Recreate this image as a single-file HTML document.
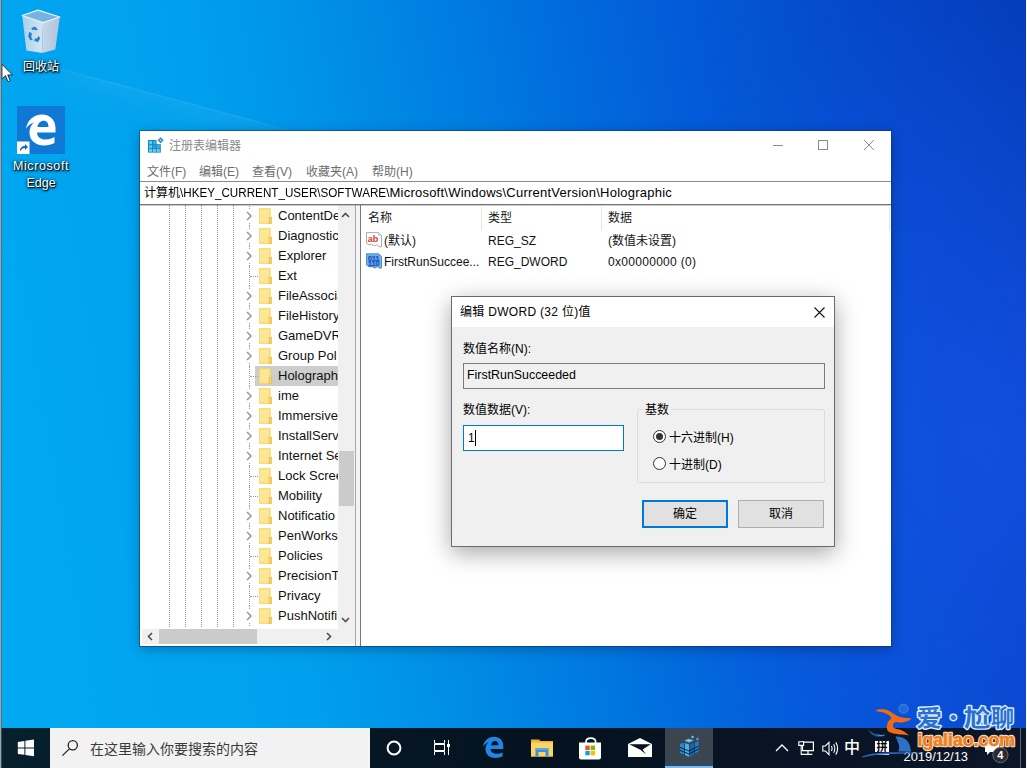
<!DOCTYPE html>
<html lang="zh-CN">
<head>
<meta charset="utf-8">
<title>注册表编辑器</title>
<style>
*{box-sizing:border-box;margin:0;padding:0}
html,body{width:1027px;height:768px;overflow:hidden}
body{position:relative;font-family:"Liberation Sans","Noto Sans CJK SC",sans-serif;font-size:12px;line-height:16px;color:#000;
background:
 radial-gradient(ellipse 380px 460px at 1000px 440px,rgba(26,86,240,.6),rgba(26,86,240,.25) 60%,rgba(26,86,240,0) 100%),
 linear-gradient(80deg,#00aaf2 0%,#02a3ef 18%,#00a0ee 27%,#0094e8 36%,#0087e4 44%,#0078e0 53%,#0070de 57%,#035ad8 70%,#0546c8 87.5%,#043cb8 100%);}
.abs{position:absolute}
#leftedge{left:0;top:0;width:1px;height:768px;background:#a3a3a3;box-shadow:1px 0 0 rgba(70,100,120,.65);z-index:50}
/* desktop icons */
.dlabel{position:absolute;color:#fff;font-size:12px;text-align:center;line-height:17px;text-shadow:1px 1px 1px rgba(0,0,0,.95),0 1px 3px rgba(0,0,0,.85),0 0 3px rgba(0,0,0,.6)}
/* main window */
#win{left:140px;top:131px;width:751px;height:515px;background:#fff;box-shadow:0 0 0 1px rgba(8,50,110,.5),0 3px 12px rgba(0,0,0,.28)}
#wi{left:1px;top:1px;width:750px;height:514px}
#title{left:-1px;top:-1px;width:751px;height:29px;background:#fff}
#title .t{position:absolute;left:29px;top:7px;font-size:12px;color:#8a8a8a;letter-spacing:0}
#menu{left:-1px;top:28px;width:751px;height:21px;background:#fff}
#menu span{position:absolute;top:4px;font-size:12px;color:#6d6d6d;white-space:nowrap}
#addr{left:-1px;top:49px;width:751px;height:24px;border-top:1px solid #8a8a8a;border-bottom:1px solid #747474;box-shadow:0 1px 0 rgba(110,110,110,.35);z-index:2;background:#fff}
#addr span{position:absolute;left:4px;top:3px;font-size:12.65px;white-space:nowrap}
#tree{left:0;top:73px;width:215px;height:441px;background:#fff;overflow:hidden}
#split{left:214px;top:73px;width:6px;height:441px;background:#f4f4f4;border-left:1px solid #a8a8a8;border-right:1px solid #767676}
#list{left:221px;top:73px;width:529px;height:441px;background:#fff;overflow:hidden}
.trow{position:absolute;left:0;height:20px;width:198px;white-space:nowrap}
.trow .lbl{position:absolute;left:137px;top:0;line-height:20px;font-size:13px;color:#111;letter-spacing:0}
.trow .fold{position:absolute;left:118px;top:2px;width:13px;height:16px}
.trow .chev{position:absolute;left:104px;top:5px;width:8px;height:10px}
.vline{position:absolute;top:0;width:0;height:422px;border-left:1px dotted #9a9a9a}
/* dialog */
#dlg{left:451px;top:296px;width:384px;height:251px;background:#f0f0f0;border:1px solid #6b6b6b;box-shadow:0 6px 22px rgba(0,0,0,.35)}
#dlg .cap{position:absolute;left:0;top:0;width:382px;height:30px;background:#fff}
#dlg .lab{position:absolute;font-size:12px;white-space:nowrap}
.btn{position:absolute;height:28px;width:86px;background:#e1e1e1;border:1px solid #adadad;text-align:center;font-size:12px;line-height:27px}

.trow.sel::before{content:"";position:absolute;left:114px;top:0;width:84px;height:20px;background:#cdcdcd}
.trow .vd{position:absolute;left:108px;top:0;height:20px;width:0;border-left:1px dotted #9a9a9a}
.trow .vt{position:absolute;left:108px;top:0;height:3px;width:0;border-left:1px dotted #9a9a9a}
.trow .vb{position:absolute;left:108px;top:17px;height:3px;width:0;border-left:1px dotted #9a9a9a}
.trow .hd{position:absolute;left:109px;top:10px;width:8px;height:0;border-top:1px dotted #9a9a9a}
#vs{left:197px;top:0px;width:17px;height:439px;background:#f0f0f0}
#vs .thumb{left:1px;top:246px;width:15px;height:55px;background:#cbcbcb}
#hs{left:1px;top:424px;width:213px;height:15px;background:#f0f0f0}
#hs .thumb{left:17px;top:0;width:98px;height:15px;background:#cbcbcb}
.hdr{left:0;top:1px;width:529px;height:25px}
.hdr span{position:absolute;top:4px;font-size:12px;color:#1a1a1a}
.hdr i{position:absolute;top:1px;width:1px;height:24px;background:#e5e5e5}
.lrow{left:0;width:529px;height:21px;white-space:nowrap}
.lrow span{position:absolute;top:3px;font-size:12px;color:#111}
.lrow .ico{position:absolute;left:4px;top:2px;width:16px;height:16px}
#dlg input{display:none}
.tbx{position:absolute;font-size:12px;white-space:nowrap}
.radio{position:absolute;width:13px;height:13px;border-radius:50%;border:1px solid #333;background:#fff}
.radio.on::after{content:"";position:absolute;left:2px;top:2px;width:7px;height:7px;border-radius:50%;background:#333}
/* taskbar */
#tb{left:0;top:728px;width:1027px;height:40px;background:linear-gradient(90deg,#06202d 0%,#061826 30%,#05121f 55%,#091526 80%,#0b1628 100%)}
#search{left:50px;top:728px;width:320px;height:40px;background:#f2f2f2}
#search span{position:absolute;left:40px;top:12.5px;font-size:14px;color:#3a3a3a;white-space:nowrap}
</style>
</head>
<body>
<div id="leftedge" class="abs"></div><div class="abs" style="left:1026px;top:0;width:1px;height:768px;background:#fff;z-index:50"></div>

<div class="abs" style="left:0;top:52px;width:320px;height:46px;transform-origin:0 0;transform:rotate(15deg);background:linear-gradient(180deg,rgba(255,255,255,.13),rgba(255,255,255,.05) 5%,rgba(255,255,255,.02) 40%,rgba(255,255,255,0));-webkit-mask-image:linear-gradient(90deg,transparent 5%,#000 30%,#000 80%,transparent)"></div>
<!-- DESKTOP ICONS -->
<div id="icons">
<!-- recycle bin -->
<svg class="abs" style="left:18px;top:6px" width="46" height="50" viewBox="0 0 46 50">
<defs>
<linearGradient id="rbL" x1="0" y1="0" x2="1" y2="0"><stop offset="0" stop-color="#a9cfea"/><stop offset="1" stop-color="#d6e6f2"/></linearGradient>
<linearGradient id="rbR" x1="0" y1="0" x2="1" y2="0"><stop offset="0" stop-color="#c6d8e8"/><stop offset="1" stop-color="#aec3d9"/></linearGradient>
</defs>
<path d="M4.2 9.5 L25 16.6 L24.2 47 L8.4 44.6z" fill="url(#rbL)"/>
<path d="M25 16.6 L41.8 11 L37.3 43.6 L24.2 47z" fill="url(#rbR)"/>
<path d="M4.2 9.5 L20 4.2 L41.8 11 L25 16.6z" fill="#74b4e2" stroke="#e6f3fb" stroke-width="1.3" stroke-linejoin="round"/>
<g fill="#1b7fd0"><path d="M13.2 22.2 l3.6 -1.8 l3 3.2 l-2.2 1 l-1.6 -1.4 l-1.4 1z"/><path d="M11.2 26 l2.6 1.2 l-0.6 4.2 l1.6 2.6 l-2.4 0.2 l-2.2 -3.6z"/><path d="M16.4 35 l3.6 1 l2.2 -3.8 l-2 -2.4 l-0.8 2.6 l-2.6 0.2z"/></g>
</svg>
<div class="dlabel" style="left:11px;top:59px;width:60px">回收站</div>
<!-- edge -->
<svg class="abs" style="left:17px;top:106px" width="48" height="48" viewBox="0 0 48 48">
<rect width="48" height="48" fill="#0f78d4"/>
<path fill="#fff" fill-rule="evenodd" d="M9 23 C10 14 17 8.4 25 8.4 C33 8.4 38.5 14 38.5 22 V26.5 H20 C20 31 24 33.5 28.5 33.5 C32 33.5 35 32.5 37.5 31 V37 C34.5 38.5 31 39.5 27 39.5 C18 39.5 12.5 34 12.5 26.5 C12.5 22 14.5 18.5 17 16.5 C13.5 17.5 10.5 20 9 23z M20.5 21 C21 17 24 14.8 26.5 14.8 C30 14.8 31.5 17.5 31.5 21z"/>
<rect x="0" y="35.5" width="12.5" height="12.5" fill="#fff"/>
<path d="M3 45.5 C3 41.5 5 40 8 40 V38 L11 41 L8 44 V42 C6 42 4.5 43 3 45.5z" fill="#1d62b8"/>
</svg>
<div class="dlabel" style="left:6px;top:158px;width:70px;font-size:12.5px"><span style="letter-spacing:.6px">Microsoft</span><br>Edge</div>
<!-- cursor -->
<svg class="abs" style="left:1px;top:63px" width="13" height="20" viewBox="0 0 14 21"><path d="M1 1 V17 L4.8 13.4 L7.6 19.8 L10 18.8 L7.3 12.6 H12.4z" fill="#fff" stroke="#222" stroke-width="1"/></svg>
</div>

<!-- MAIN WINDOW -->
<div id="win" class="abs"><div id="wi" class="abs">
  <div id="title" class="abs"><svg class="abs" style="left:8px;top:6px" width="16" height="16" viewBox="0 0 16 16">
<rect x="0" y="3" width="8.6" height="12.6" fill="#1b86bd"/><rect x="8" y="7.2" width="4.8" height="8.4" fill="#1b86bd"/>
<rect x="1" y="4" width="3" height="3.2" fill="#56cdf9"/><rect x="4.9" y="4" width="3" height="3.2" fill="#2eb0e6"/>
<rect x="1" y="8.1" width="3" height="3.2" fill="#49c6f7"/><rect x="4.9" y="8.1" width="3" height="3.2" fill="#2aa2d8"/><rect x="8.8" y="8.1" width="3" height="3.2" fill="#3ab1e4"/>
<rect x="1" y="12.1" width="3" height="2.8" fill="#5fd0fa"/><rect x="4.9" y="12.1" width="3" height="2.8" fill="#5fd0fa"/><rect x="8.8" y="12.1" width="3" height="2.8" fill="#5fd0fa"/>
<path d="M12.6 0.2 L15.6 3.2 L12.6 6.2 L9.6 3.2z" fill="#1b86bd"/><path d="M12.6 1.8 L14 3.2 L12.6 4.6 L11.2 3.2z" fill="#7fdcfb"/>
</svg><span class="t">注册表编辑器</span><svg class="abs" style="left:632px;top:8px" width="104" height="14" viewBox="0 0 104 14">
<path d="M1 6.5 H11" stroke="#8a8a8a" stroke-width="1" fill="none"/>
<rect x="46.5" y="1.5" width="9" height="9" stroke="#8a8a8a" stroke-width="1" fill="none"/>
<path d="M92 1 L102 11 M102 1 L92 11" stroke="#8a8a8a" stroke-width="1" fill="none"/>
</svg></div>
  <div id="menu" class="abs">
    <span style="left:7px">文件(F)</span><span style="left:59px">编辑(E)</span><span style="left:112px">查看(V)</span><span style="left:166px">收藏夹(A)</span><span style="left:232px">帮助(H)</span>
  </div>
  <div id="addr" class="abs"><span style="font-size:12px">计算机</span><span style="left:39.5px;transform:scaleX(.922);transform-origin:0 0">\HKEY_CURRENT_USER\SOFTWARE\</span><span style="left:249.5px;font-size:13px;letter-spacing:.23px">Microsoft\Windows\CurrentVersion\Holographic</span></div>
  <div id="tree" class="abs">
<div class="vline" style="left:28px"></div>
<div class="vline" style="left:44px"></div>
<div class="vline" style="left:60px"></div>
<div class="vline" style="left:76px"></div>
<div class="vline" style="left:92px"></div>
<div class="trow" style="top:1px"><i class="vt"></i><i class="vb"></i><svg class="chev" viewBox="0 0 8 10"><path d="M2 1 L6 5 L2 9" fill="none" stroke="#979797" stroke-width="1.5"/></svg><svg class="fold" viewBox="0 0 13 16"><path d="M0.3 0.3 h11 v15.2 h-11z" fill="#fce284" stroke="#f5d15e" stroke-width=".7"/><path d="M1.4 2 h8.4 v11.6 h-8.4z" fill="#fde796"/><path d="M10.2 9.4 h2.3 v6.1 h-2.3z" fill="#f9dc70" stroke="#e3ba42" stroke-width=".8"/></svg><span class="lbl">ContentDe</span></div>
<div class="trow" style="top:21px"><i class="vt"></i><i class="vb"></i><svg class="chev" viewBox="0 0 8 10"><path d="M2 1 L6 5 L2 9" fill="none" stroke="#979797" stroke-width="1.5"/></svg><svg class="fold" viewBox="0 0 13 16"><path d="M0.3 0.3 h11 v15.2 h-11z" fill="#fce284" stroke="#f5d15e" stroke-width=".7"/><path d="M1.4 2 h8.4 v11.6 h-8.4z" fill="#fde796"/><path d="M10.2 9.4 h2.3 v6.1 h-2.3z" fill="#f9dc70" stroke="#e3ba42" stroke-width=".8"/></svg><span class="lbl">Diagnostic</span></div>
<div class="trow" style="top:41px"><i class="vt"></i><i class="vb"></i><svg class="chev" viewBox="0 0 8 10"><path d="M2 1 L6 5 L2 9" fill="none" stroke="#979797" stroke-width="1.5"/></svg><svg class="fold" viewBox="0 0 13 16"><path d="M0.3 0.3 h11 v15.2 h-11z" fill="#fce284" stroke="#f5d15e" stroke-width=".7"/><path d="M1.4 2 h8.4 v11.6 h-8.4z" fill="#fde796"/><path d="M10.2 9.4 h2.3 v6.1 h-2.3z" fill="#f9dc70" stroke="#e3ba42" stroke-width=".8"/></svg><span class="lbl">Explorer</span></div>
<div class="trow" style="top:61px"><i class="vd"></i><i class="hd"></i><svg class="fold" viewBox="0 0 13 16"><path d="M0.3 0.3 h11 v15.2 h-11z" fill="#fce284" stroke="#f5d15e" stroke-width=".7"/><path d="M1.4 2 h8.4 v11.6 h-8.4z" fill="#fde796"/><path d="M10.2 9.4 h2.3 v6.1 h-2.3z" fill="#f9dc70" stroke="#e3ba42" stroke-width=".8"/></svg><span class="lbl">Ext</span></div>
<div class="trow" style="top:81px"><i class="vt"></i><i class="vb"></i><svg class="chev" viewBox="0 0 8 10"><path d="M2 1 L6 5 L2 9" fill="none" stroke="#979797" stroke-width="1.5"/></svg><svg class="fold" viewBox="0 0 13 16"><path d="M0.3 0.3 h11 v15.2 h-11z" fill="#fce284" stroke="#f5d15e" stroke-width=".7"/><path d="M1.4 2 h8.4 v11.6 h-8.4z" fill="#fde796"/><path d="M10.2 9.4 h2.3 v6.1 h-2.3z" fill="#f9dc70" stroke="#e3ba42" stroke-width=".8"/></svg><span class="lbl">FileAssocia</span></div>
<div class="trow" style="top:101px"><i class="vt"></i><i class="vb"></i><svg class="chev" viewBox="0 0 8 10"><path d="M2 1 L6 5 L2 9" fill="none" stroke="#979797" stroke-width="1.5"/></svg><svg class="fold" viewBox="0 0 13 16"><path d="M0.3 0.3 h11 v15.2 h-11z" fill="#fce284" stroke="#f5d15e" stroke-width=".7"/><path d="M1.4 2 h8.4 v11.6 h-8.4z" fill="#fde796"/><path d="M10.2 9.4 h2.3 v6.1 h-2.3z" fill="#f9dc70" stroke="#e3ba42" stroke-width=".8"/></svg><span class="lbl">FileHistory</span></div>
<div class="trow" style="top:121px"><i class="vt"></i><i class="vb"></i><svg class="chev" viewBox="0 0 8 10"><path d="M2 1 L6 5 L2 9" fill="none" stroke="#979797" stroke-width="1.5"/></svg><svg class="fold" viewBox="0 0 13 16"><path d="M0.3 0.3 h11 v15.2 h-11z" fill="#fce284" stroke="#f5d15e" stroke-width=".7"/><path d="M1.4 2 h8.4 v11.6 h-8.4z" fill="#fde796"/><path d="M10.2 9.4 h2.3 v6.1 h-2.3z" fill="#f9dc70" stroke="#e3ba42" stroke-width=".8"/></svg><span class="lbl">GameDVR</span></div>
<div class="trow" style="top:141px"><i class="vt"></i><i class="vb"></i><svg class="chev" viewBox="0 0 8 10"><path d="M2 1 L6 5 L2 9" fill="none" stroke="#979797" stroke-width="1.5"/></svg><svg class="fold" viewBox="0 0 13 16"><path d="M0.3 0.3 h11 v15.2 h-11z" fill="#fce284" stroke="#f5d15e" stroke-width=".7"/><path d="M1.4 2 h8.4 v11.6 h-8.4z" fill="#fde796"/><path d="M10.2 9.4 h2.3 v6.1 h-2.3z" fill="#f9dc70" stroke="#e3ba42" stroke-width=".8"/></svg><span class="lbl">Group Pol</span></div>
<div class="trow sel" style="top:161px"><i class="vd"></i><i class="hd"></i><svg class="fold" viewBox="0 0 13 16"><path d="M0.3 0.3 h11 v15.2 h-11z" fill="#fce284" stroke="#f5d15e" stroke-width=".7"/><path d="M1.4 2 h8.4 v11.6 h-8.4z" fill="#fde796"/><path d="M10.2 9.4 h2.3 v6.1 h-2.3z" fill="#f9dc70" stroke="#e3ba42" stroke-width=".8"/></svg><span class="lbl">Holograph</span></div>
<div class="trow" style="top:181px"><i class="vt"></i><i class="vb"></i><svg class="chev" viewBox="0 0 8 10"><path d="M2 1 L6 5 L2 9" fill="none" stroke="#979797" stroke-width="1.5"/></svg><svg class="fold" viewBox="0 0 13 16"><path d="M0.3 0.3 h11 v15.2 h-11z" fill="#fce284" stroke="#f5d15e" stroke-width=".7"/><path d="M1.4 2 h8.4 v11.6 h-8.4z" fill="#fde796"/><path d="M10.2 9.4 h2.3 v6.1 h-2.3z" fill="#f9dc70" stroke="#e3ba42" stroke-width=".8"/></svg><span class="lbl">ime</span></div>
<div class="trow" style="top:201px"><i class="vt"></i><i class="vb"></i><svg class="chev" viewBox="0 0 8 10"><path d="M2 1 L6 5 L2 9" fill="none" stroke="#979797" stroke-width="1.5"/></svg><svg class="fold" viewBox="0 0 13 16"><path d="M0.3 0.3 h11 v15.2 h-11z" fill="#fce284" stroke="#f5d15e" stroke-width=".7"/><path d="M1.4 2 h8.4 v11.6 h-8.4z" fill="#fde796"/><path d="M10.2 9.4 h2.3 v6.1 h-2.3z" fill="#f9dc70" stroke="#e3ba42" stroke-width=".8"/></svg><span class="lbl">Immersive</span></div>
<div class="trow" style="top:221px"><i class="vt"></i><i class="vb"></i><svg class="chev" viewBox="0 0 8 10"><path d="M2 1 L6 5 L2 9" fill="none" stroke="#979797" stroke-width="1.5"/></svg><svg class="fold" viewBox="0 0 13 16"><path d="M0.3 0.3 h11 v15.2 h-11z" fill="#fce284" stroke="#f5d15e" stroke-width=".7"/><path d="M1.4 2 h8.4 v11.6 h-8.4z" fill="#fde796"/><path d="M10.2 9.4 h2.3 v6.1 h-2.3z" fill="#f9dc70" stroke="#e3ba42" stroke-width=".8"/></svg><span class="lbl">InstallServ</span></div>
<div class="trow" style="top:241px"><i class="vt"></i><i class="vb"></i><svg class="chev" viewBox="0 0 8 10"><path d="M2 1 L6 5 L2 9" fill="none" stroke="#979797" stroke-width="1.5"/></svg><svg class="fold" viewBox="0 0 13 16"><path d="M0.3 0.3 h11 v15.2 h-11z" fill="#fce284" stroke="#f5d15e" stroke-width=".7"/><path d="M1.4 2 h8.4 v11.6 h-8.4z" fill="#fde796"/><path d="M10.2 9.4 h2.3 v6.1 h-2.3z" fill="#f9dc70" stroke="#e3ba42" stroke-width=".8"/></svg><span class="lbl">Internet Se</span></div>
<div class="trow" style="top:261px"><i class="vd"></i><i class="hd"></i><svg class="fold" viewBox="0 0 13 16"><path d="M0.3 0.3 h11 v15.2 h-11z" fill="#fce284" stroke="#f5d15e" stroke-width=".7"/><path d="M1.4 2 h8.4 v11.6 h-8.4z" fill="#fde796"/><path d="M10.2 9.4 h2.3 v6.1 h-2.3z" fill="#f9dc70" stroke="#e3ba42" stroke-width=".8"/></svg><span class="lbl">Lock Scree</span></div>
<div class="trow" style="top:281px"><i class="vd"></i><i class="hd"></i><svg class="fold" viewBox="0 0 13 16"><path d="M0.3 0.3 h11 v15.2 h-11z" fill="#fce284" stroke="#f5d15e" stroke-width=".7"/><path d="M1.4 2 h8.4 v11.6 h-8.4z" fill="#fde796"/><path d="M10.2 9.4 h2.3 v6.1 h-2.3z" fill="#f9dc70" stroke="#e3ba42" stroke-width=".8"/></svg><span class="lbl">Mobility</span></div>
<div class="trow" style="top:301px"><i class="vt"></i><i class="vb"></i><svg class="chev" viewBox="0 0 8 10"><path d="M2 1 L6 5 L2 9" fill="none" stroke="#979797" stroke-width="1.5"/></svg><svg class="fold" viewBox="0 0 13 16"><path d="M0.3 0.3 h11 v15.2 h-11z" fill="#fce284" stroke="#f5d15e" stroke-width=".7"/><path d="M1.4 2 h8.4 v11.6 h-8.4z" fill="#fde796"/><path d="M10.2 9.4 h2.3 v6.1 h-2.3z" fill="#f9dc70" stroke="#e3ba42" stroke-width=".8"/></svg><span class="lbl">Notificatio</span></div>
<div class="trow" style="top:321px"><i class="vt"></i><i class="vb"></i><svg class="chev" viewBox="0 0 8 10"><path d="M2 1 L6 5 L2 9" fill="none" stroke="#979797" stroke-width="1.5"/></svg><svg class="fold" viewBox="0 0 13 16"><path d="M0.3 0.3 h11 v15.2 h-11z" fill="#fce284" stroke="#f5d15e" stroke-width=".7"/><path d="M1.4 2 h8.4 v11.6 h-8.4z" fill="#fde796"/><path d="M10.2 9.4 h2.3 v6.1 h-2.3z" fill="#f9dc70" stroke="#e3ba42" stroke-width=".8"/></svg><span class="lbl">PenWorks</span></div>
<div class="trow" style="top:341px"><i class="vd"></i><i class="hd"></i><svg class="fold" viewBox="0 0 13 16"><path d="M0.3 0.3 h11 v15.2 h-11z" fill="#fce284" stroke="#f5d15e" stroke-width=".7"/><path d="M1.4 2 h8.4 v11.6 h-8.4z" fill="#fde796"/><path d="M10.2 9.4 h2.3 v6.1 h-2.3z" fill="#f9dc70" stroke="#e3ba42" stroke-width=".8"/></svg><span class="lbl">Policies</span></div>
<div class="trow" style="top:361px"><i class="vt"></i><i class="vb"></i><svg class="chev" viewBox="0 0 8 10"><path d="M2 1 L6 5 L2 9" fill="none" stroke="#979797" stroke-width="1.5"/></svg><svg class="fold" viewBox="0 0 13 16"><path d="M0.3 0.3 h11 v15.2 h-11z" fill="#fce284" stroke="#f5d15e" stroke-width=".7"/><path d="M1.4 2 h8.4 v11.6 h-8.4z" fill="#fde796"/><path d="M10.2 9.4 h2.3 v6.1 h-2.3z" fill="#f9dc70" stroke="#e3ba42" stroke-width=".8"/></svg><span class="lbl">PrecisionT</span></div>
<div class="trow" style="top:381px"><i class="vd"></i><i class="hd"></i><svg class="fold" viewBox="0 0 13 16"><path d="M0.3 0.3 h11 v15.2 h-11z" fill="#fce284" stroke="#f5d15e" stroke-width=".7"/><path d="M1.4 2 h8.4 v11.6 h-8.4z" fill="#fde796"/><path d="M10.2 9.4 h2.3 v6.1 h-2.3z" fill="#f9dc70" stroke="#e3ba42" stroke-width=".8"/></svg><span class="lbl">Privacy</span></div>
<div class="trow" style="top:401px"><i class="vt"></i><i class="vb"></i><svg class="chev" viewBox="0 0 8 10"><path d="M2 1 L6 5 L2 9" fill="none" stroke="#979797" stroke-width="1.5"/></svg><svg class="fold" viewBox="0 0 13 16"><path d="M0.3 0.3 h11 v15.2 h-11z" fill="#fce284" stroke="#f5d15e" stroke-width=".7"/><path d="M1.4 2 h8.4 v11.6 h-8.4z" fill="#fde796"/><path d="M10.2 9.4 h2.3 v6.1 h-2.3z" fill="#f9dc70" stroke="#e3ba42" stroke-width=".8"/></svg><span class="lbl">PushNotifi</span></div>
<div id="vs" class="abs"><svg class="abs" style="left:3px;top:7px" width="9" height="6" viewBox="0 0 9 6"><path d="M1 5 L4.5 1.5 L8 5" fill="none" stroke="#505050" stroke-width="1.6"/></svg><div class="thumb abs"></div><svg class="abs" style="left:3px;top:412px" width="9" height="6" viewBox="0 0 9 6"><path d="M1 1 L4.5 4.5 L8 1" fill="none" stroke="#505050" stroke-width="1.6"/></svg></div>
<div id="hs" class="abs"><svg class="abs" style="left:5px;top:3px" width="6" height="9" viewBox="0 0 6 9"><path d="M5 1 L1.5 4.5 L5 8" fill="none" stroke="#505050" stroke-width="1.6"/></svg><div class="thumb abs"></div><svg class="abs" style="left:184px;top:3px" width="6" height="9" viewBox="0 0 6 9"><path d="M1 1 L4.5 4.5 L1 8" fill="none" stroke="#505050" stroke-width="1.6"/></svg></div>
</div>
  <div id="split" class="abs"></div>
  <div id="list" class="abs">
<div class="hdr abs"><span style="left:6px">名称</span><i style="left:119px"></i><span style="left:126px">类型</span><i style="left:239px"></i><span style="left:246px">数据</span><i style="left:527px"></i></div>
<div class="lrow abs" style="top:25px">
<svg class="ico" viewBox="0 0 16 16"><path d="M0.5 0.6 h12 l3 2.8 v11.6 l-2.6-0.4 l-2-1.8 l-2.6 1 l-2.8-1.4 l-2.4 0.4 l-2.6-1.6z" fill="#fff" stroke="#a3a3a3" stroke-width=".9"/><path d="M12.5 0.6 v2.8 h3" fill="none" stroke="#b9b9b9" stroke-width=".7"/><text x="1.7" y="9.9" font-family="Liberation Sans,sans-serif" font-weight="bold" font-size="9.6" fill="#c9452c" textLength="10.6" lengthAdjust="spacingAndGlyphs">ab</text></svg>
<span style="left:22px">(默认)</span><span style="left:126px">REG_SZ</span><span style="left:246px">(数值未设置)</span></div>
<div class="lrow abs" style="top:46px">
<svg class="ico" viewBox="0 0 16 16"><path d="M0.5 0.8 h12 l3 2.6 v11.4 l-1.6 0.6 l-2.4-1.8 l-2.5 1.5 l-3-1.5 l-2.6 0.2 l-2.9-1.7z" fill="#74b1f1" stroke="#4183d2" stroke-width=".9"/><g font-family="Liberation Sans,sans-serif" font-weight="bold" font-size="6.8" fill="#1b5bbf" stroke="#1b5bbf" stroke-width=".35"><text x="2" y="7.6" textLength="11.6" lengthAdjust="spacingAndGlyphs">011</text><text x="2" y="13" textLength="11.6" lengthAdjust="spacingAndGlyphs">110</text></g></svg>
<span style="left:22px">FirstRunSuccee...</span><span style="left:126px">REG_DWORD</span><span style="left:246px;letter-spacing:.3px">0x00000000 (0)</span></div>
</div>
</div></div>

<!-- DIALOG -->
<div id="dlg" class="abs">
  <div class="cap"><span class="lab" style="left:8px;top:7px;letter-spacing:.3px">编辑 DWORD (32 位)值</span>
  <svg class="abs" style="left:362px;top:10px" width="11" height="11" viewBox="0 0 11 11"><path d="M0.5 0.5 L10.5 10.5 M10.5 0.5 L0.5 10.5" stroke="#111" stroke-width="1.1" fill="none"/></svg></div>
  <span class="lab" style="left:11px;top:44px">数值名称(N):</span>
  <div class="tbx" style="left:11px;top:66px;width:362px;height:26px;border:1px solid #7a7a7a;background:#f0f0f0;padding:3px 0 0 3px;font-size:12.4px">FirstRunSucceeded</div>
  <span class="lab" style="left:11px;top:105px">数值数据(V):</span>
  <div class="tbx" style="left:11px;top:128px;width:161px;height:26px;border:1px solid #0078d7;background:#fff;padding:4px 0 0 4px">1<i style="position:absolute;left:11px;top:4px;width:1px;height:16px;background:#000"></i></div>
  <div class="abs" style="left:185px;top:112px;width:188px;height:74px;border:1px solid #dcdcdc;border-radius:2px"></div>
  <span class="lab" style="left:191px;top:105px;background:#f0f0f0;padding:0 2px">基数</span>
  <i class="radio on" style="left:201px;top:133px"></i><span class="lab" style="left:217px;top:133px">十六进制(H)</span>
  <i class="radio" style="left:201px;top:160px"></i><span class="lab" style="left:217px;top:160px">十进制(D)</span>
  <div class="btn" style="left:190px;top:203px;border:2px solid #0078d7;line-height:25px">确定</div>
  <div class="btn" style="left:286px;top:203px">取消</div>
</div>

<!-- TASKBAR -->
<div id="tb" class="abs">
<!-- start -->
<svg class="abs" style="left:17px;top:11px" width="18" height="18" viewBox="0 0 18 18"><path d="M0.8 2.9 L7.4 2 V8.4 H0.8z M8.4 1.8 L17 0.6 V8.4 H8.4z M0.8 9.4 H7.4 V15.8 L0.8 14.9z M8.4 9.4 H17 V17.2 L8.4 16z" fill="#fff"/></svg>
<!-- cortana -->
<svg class="abs" style="left:385px;top:11px" width="18" height="18" viewBox="0 0 18 18"><circle cx="9" cy="9" r="6.4" fill="none" stroke="#fff" stroke-width="2"/></svg>
<!-- task view -->
<svg class="abs" style="left:433px;top:11px" width="18" height="17" viewBox="0 0 18 17"><path d="M1.5 1 V4.5 H11.5 V1 M1.5 16 V12.5 H11.5 V16" stroke="#fff" stroke-width="1" fill="none"/><rect x="1.5" y="5.5" width="10" height="6" fill="none" stroke="#fff" stroke-width="1"/><path d="M15.5 1 V16" stroke="#fff" stroke-width="1"/><rect x="14" y="5" width="3" height="3" fill="#fff"/></svg>
<!-- edge -->
<svg class="abs" style="left:481px;top:7px" width="24" height="24" viewBox="6 6 35 35"><path fill="#1e88e6" fill-rule="evenodd" d="M9 23 C10 14 17 8.4 25 8.4 C33 8.4 38.5 14 38.5 22 V26.5 H20 C20 31 24 33.5 28.5 33.5 C32 33.5 35 32.5 37.5 31 V37 C34.5 38.5 31 39.5 27 39.5 C18 39.5 12.5 34 12.5 26.5 C12.5 22 14.5 18.5 17 16.5 C13.5 17.5 10.5 20 9 23z M20.5 21 C21 17 24 14.8 26.5 14.8 C30 14.8 31.5 17.5 31.5 21z"/></svg>
<!-- explorer -->
<svg class="abs" style="left:531px;top:10px" width="22" height="19" viewBox="0 0 22 19"><path d="M0 1.5 H8 L9.5 3 H22 V18.5 H0z" fill="#e9b43a"/><path d="M0 4.5 H22 V18.5 H0z" fill="#fcd462"/><path d="M4.5 10 H17.5 V18.5 H14.5 V14 H7.5 V18.5 H4.5z" fill="#3e8fd8"/><path d="M4.5 10 H17.5 V12 H4.5z" fill="#5aa9ea"/></svg>
<!-- store -->
<svg class="abs" style="left:578px;top:9px" width="24" height="23" viewBox="0 0 24 23"><path d="M8 6 V4.8 C8 -0.2 17.6 -0.2 17.6 4.8 V6" fill="none" stroke="#fff" stroke-width="1.7"/><path d="M1 5.4 H23 V20.5 Q23 22.6 21 22.6 H3 Q1 22.6 1 20.5z" fill="#fff"/><rect x="7.3" y="8.6" width="4.4" height="4.4" fill="#f25022"/><rect x="12.6" y="8.6" width="4.4" height="4.4" fill="#7fba00"/><rect x="7.3" y="13.9" width="4.4" height="4.4" fill="#00a4ef"/><rect x="12.6" y="13.9" width="4.4" height="4.4" fill="#ffb900"/></svg>
<!-- mail -->
<svg class="abs" style="left:628px;top:10px" width="24" height="19" viewBox="0 0 24 19"><path d="M0 6 L12 0 L24 6 V19 H0z" fill="#fff"/><path d="M1.2 6.2 H22.8 L14.6 11.4 L18 16.6 L12.4 11.8z" fill="#06121f"/></svg>
<!-- regedit active -->
<div class="abs" style="left:665px;top:0;width:48px;height:40px;background:linear-gradient(180deg,#2b4a6c 0,#2b4a6c 1px,#3b4550 1px,#3b4550 33px,#34475b 34px,#34475b 38px)"></div>
<div class="abs" style="left:665px;top:38px;width:48px;height:2px;background:#7bbcee"></div>
<svg class="abs" style="left:679px;top:7px" width="21" height="23" viewBox="0 0 21 23"><g fill="#2488d6"><path d="M1 9 L5 7.6 V19.6 L1 18z"/><path d="M6 8 L10 9.6 V22 L6 20z" fill="#45b2f0"/><path d="M11 9.6 L15 8 V19.8 L11 22z" fill="#1266b4"/><path d="M16 7.6 L19.6 6 V16.4 L16 18.4z" fill="#1f7ccc"/><path d="M5.4 5.6 L10 3.8 L14.6 5.6 L10 7.6z" fill="#6cc6f4"/><path d="M12 2 L13.6 0.4 L15.2 2 L13.6 3.6z" fill="#6cc6f4"/><path d="M17 4 L18.4 2.6 L19.8 4 L18.4 5.4z" fill="#4fb4ee"/></g><path d="M1 12.4 L10 16 L19.6 11 M1 15.4 L10 19 L19.6 14" stroke="#0b1727" stroke-width="0.9" fill="none"/></svg>
<!-- tray -->
<svg class="abs" style="left:775px;top:15px" width="14" height="9" viewBox="0 0 14 9"><path d="M1 8 L7 2 L13 8" fill="none" stroke="#fff" stroke-width="1.3"/></svg>
<svg class="abs" style="left:798px;top:13px" width="17" height="15" viewBox="0 0 17 15"><path d="M4.5 1.2 H15.4 V9.6 H4.5z M10 9.6 V13.2 M5.6 13.4 H14.4" fill="none" stroke="#fff" stroke-width="1.2"/><path d="M0.8 0.8 H5.6 V4.4 H0.8z" fill="#0b1727" stroke="#fff" stroke-width="1.1"/><path d="M3.2 4.4 V13.4 H6" fill="none" stroke="#fff" stroke-width="1.1"/></svg>
<svg class="abs" style="left:822px;top:13px" width="18" height="15" viewBox="0 0 18 15"><path d="M0.8 5 H3.4 L7 1.4 V13.6 L3.4 10 H0.8z" fill="none" stroke="#fff" stroke-width="1.1"/><path d="M9.4 5 Q10.8 7.5 9.4 10 M11.6 3.2 Q14 7.5 11.6 11.8 M13.8 1.4 Q17.4 7.5 13.8 13.6" fill="none" stroke="#fff" stroke-width="1.1"/></svg>
<span class="abs" style="left:844px;top:10px;font-size:16px;line-height:20px;color:#fff;font-weight:500">中</span>
<div class="abs" style="left:875px;top:13px;width:14px;height:11px;background:#fff"><span class="abs" style="left:1.5px;top:-1.5px;font-size:11px;line-height:14px;color:#000;font-weight:bold">拼</span></div><div class="abs" style="left:875px;top:26px;width:14px;height:1px;background:#fff"></div>
<span class="abs" style="left:903.5px;top:21px;font-size:12.9px;line-height:16px;color:#fff">2019/12/13</span>
<!-- notif -->
<svg class="abs" style="left:984px;top:13px" width="26" height="24" viewBox="0 0 26 24"><path d="M1 1 H15 V11 H6 L3 14 V11 H1z" fill="#fff"/><circle cx="16.4" cy="14" r="7.6" fill="#2a2a2e" stroke="#6a6a6e" stroke-width="1"/><text x="16.4" y="18" text-anchor="middle" font-family="Liberation Sans,sans-serif" font-size="11" font-weight="bold" fill="#fff">4</text></svg>
<div class="abs" style="left:1020px;top:0;width:1px;height:40px;background:#5e6670"></div>
</div>
<div id="search" class="abs"><svg class="abs" style="left:11px;top:11px" width="18" height="18" viewBox="0 0 18 18"><circle cx="11.8" cy="6.2" r="4.6" fill="none" stroke="#222" stroke-width="1.3"/><path d="M8.6 9.6 L1.4 16.6" stroke="#222" stroke-width="1.3"/></svg><span>在这里输入你要搜索的内容</span></div>

<!-- WATERMARK -->
<svg id="wm" class="abs" style="left:862px;top:698px;z-index:40" width="160" height="66" viewBox="0 0 160 66">
<circle cx="41.5" cy="10.7" r="4.6" fill="rgba(70,140,225,.4)" stroke="rgba(120,175,240,.45)" stroke-width="1"/>
<path d="M6 30.5 C9 35 15 37.5 23.5 37 C19 40.5 8.5 39.5 6 30.5z" fill="#1f4f96"/>
<path d="M14 36 C17 37.2 20 37.3 23 36.6 C20.5 38.8 16.5 38.6 14 36z" fill="#5c93d8"/>
<path d="M33.5 38.5 C37 38.2 40 39 42.4 40.4 C46.5 43 48.6 47 48.9 53.7 L36.4 53.6 C37.6 50 37.4 47 36 44.7 C35.2 42.4 34.4 40.6 33.5 38.5z" fill="#2f6fc6"/>
<path d="M0 58.5 C8 55.2 20 54.3 34 54.2 C46 54.1 56 54.2 64 54.8 C50 55.6 40 55.8 30 56 C18 56.4 8 57.4 0 59.6z" fill="#2a64b8"/>
<path d="M13.2 13 C15 11.5 17 11 19.2 11.2 C21 11.2 23 11.2 25.2 12 C27.5 13 29.5 14.2 31.2 15.5 C34 17.5 36.5 18.8 39 19.3 C43 20.3 46.5 20.2 49.7 20.5 C48.5 21.7 47 22.6 45 23.2 C42.5 24 40 24.6 38 24.5 L33.8 24 C32.8 24.4 31.8 25 31.2 25.8 C30.6 27 30.8 28.6 31.7 29.7 C33.5 30.8 36 31 38 31.8 C40 32.5 42 33.4 43.3 34.4 C44.8 35.4 46 36.5 46.9 37.6 C44.5 36.9 42 36.6 39.8 36.5 C37.5 36.4 35 36.2 33 35.7 C30.8 35.3 28.6 34.8 27 34 C26 33.2 25.2 32.2 25 31 C24.6 29.2 24.8 27.4 25.4 25.8 C25.8 24.5 26.3 23.3 27 22.4 C27.8 21.5 28.7 20.8 29.5 20.2 C29 19 28 18 27 17.2 C25.7 16.2 24.2 15.5 22.6 15 C21 14.4 19.2 14 17.5 13.8 C16 13.5 14.6 13.2 13.2 13z" fill="#f26a12"/>
<g font-family="'Liberation Sans','Noto Sans CJK SC',sans-serif">
<g font-size="23" font-weight="bold" stroke="#d9ebff" stroke-width="2.8" stroke-linejoin="round" fill="#2a70d0">
<text x="54.5" y="27.5" textLength="25.4" lengthAdjust="spacingAndGlyphs">爱</text><text x="91.2" y="27.2" font-size="20" text-anchor="middle" font-family="'Noto Sans CJK SC',sans-serif">·</text><text x="102" y="27.5" textLength="26.5" lengthAdjust="spacingAndGlyphs">尬</text><text x="129" y="27.5" textLength="23" lengthAdjust="spacingAndGlyphs">聊</text></g>
<g font-size="23" font-weight="bold" fill="#2a70d0">
<text x="54.5" y="27.5" textLength="25.4" lengthAdjust="spacingAndGlyphs">爱</text><text x="91.2" y="27.2" font-size="20" text-anchor="middle" font-family="'Noto Sans CJK SC',sans-serif">·</text><text x="102" y="27.5" textLength="26.5" lengthAdjust="spacingAndGlyphs">尬</text><text x="129" y="27.5" textLength="23" lengthAdjust="spacingAndGlyphs">聊</text></g>
<text x="55.5" y="48" font-size="18.8" font-weight="bold" fill="#f27c1c" stroke="#ffe6cc" stroke-width="2.4" stroke-linejoin="round" textLength="97.5" lengthAdjust="spacingAndGlyphs">igaliao.com</text>
<text x="55.5" y="48" font-size="18.8" font-weight="bold" fill="#f27c1c" stroke="#f27c1c" stroke-width=".5" textLength="97.5" lengthAdjust="spacingAndGlyphs">igaliao.com</text>
</g>
</svg>
</body>
</html>
